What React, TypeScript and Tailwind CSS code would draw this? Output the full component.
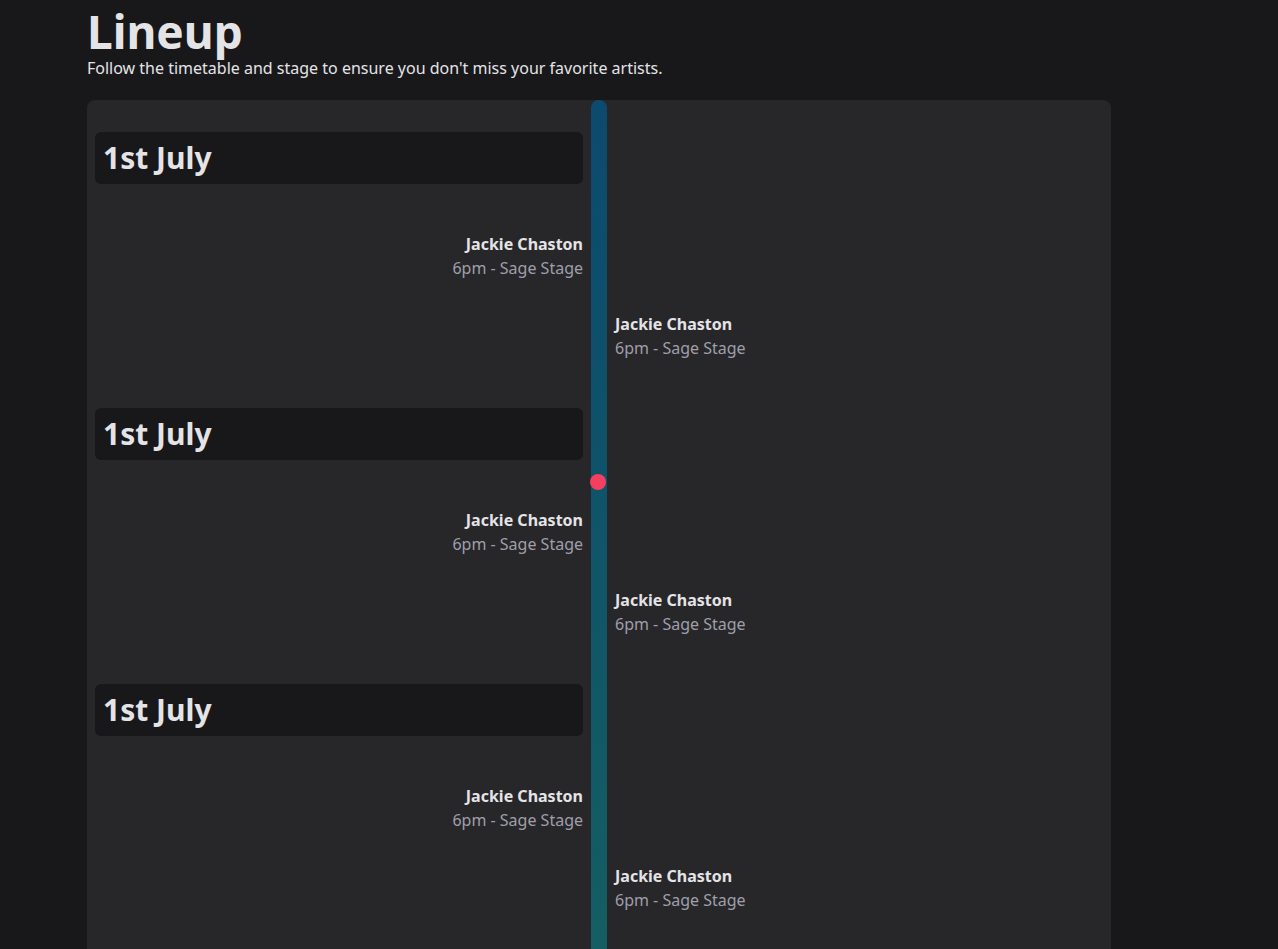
const slots = [
  { date: "1st July", header: "row-start-1 mt-8", left: "row-start-2", right: "row-start-3" },
  { date: "1st July", header: "row-start-4 mt-12", left: "row-start-5", right: "row-start-6" },
  { date: "1st July", header: "row-start-7 mt-12", left: "row-start-8", right: "row-start-9" },
];

const act = { name: "Jackie Chaston", time: "6pm - Sage Stage" };

export default function App() {
  return (
    <div className="min-h-screen bg-[#18181b] text-zinc-200 font-['Noto_Sans',sans-serif]">
      <div className="mx-auto max-w-6xl px-6">
        <h1 className="pt-1 text-[46px] font-bold leading-[54px] text-zinc-200">Lineup</h1>
        <p className="text-base leading-5 text-zinc-200">
          Follow the timetable and stage to ensure you don&apos;t miss your favorite artists.
        </p>

        <div className="mt-[22px] max-w-5xl rounded-lg bg-[#27272a] px-2 pb-12">
          <div className="grid grid-cols-[1fr_16px_1fr] gap-x-2">
            <div className="relative col-start-2 row-start-1 row-end-[10] -mb-12 rounded-t-full bg-gradient-to-b from-[#0c4a6e] to-[#155e63]">
              <span className="absolute left-[-1px] top-[374px] h-4 w-4 rounded-full bg-[#f43f5e]" />
            </div>
            {slots.map((slot, i) => (
              <div key={i} className="contents">
                <div className={`col-start-1 ${slot.header} rounded-md bg-[#18181b] p-2`}>
                  <h2 className="text-3xl font-bold leading-9 text-zinc-200">{slot.date}</h2>
                </div>
                <div className={`col-start-1 ${slot.left} mt-12 text-right`}>
                  <p className="text-base font-bold leading-6 text-zinc-200">{act.name}</p>
                  <p className="text-base leading-6 text-zinc-400">{act.time}</p>
                </div>
                <div className={`col-start-3 ${slot.right} mt-8`}>
                  <p className="text-base font-bold leading-6 text-zinc-200">{act.name}</p>
                  <p className="text-base leading-6 text-zinc-400">{act.time}</p>
                </div>
              </div>
            ))}
          </div>
        </div>
      </div>
    </div>
  );
}
